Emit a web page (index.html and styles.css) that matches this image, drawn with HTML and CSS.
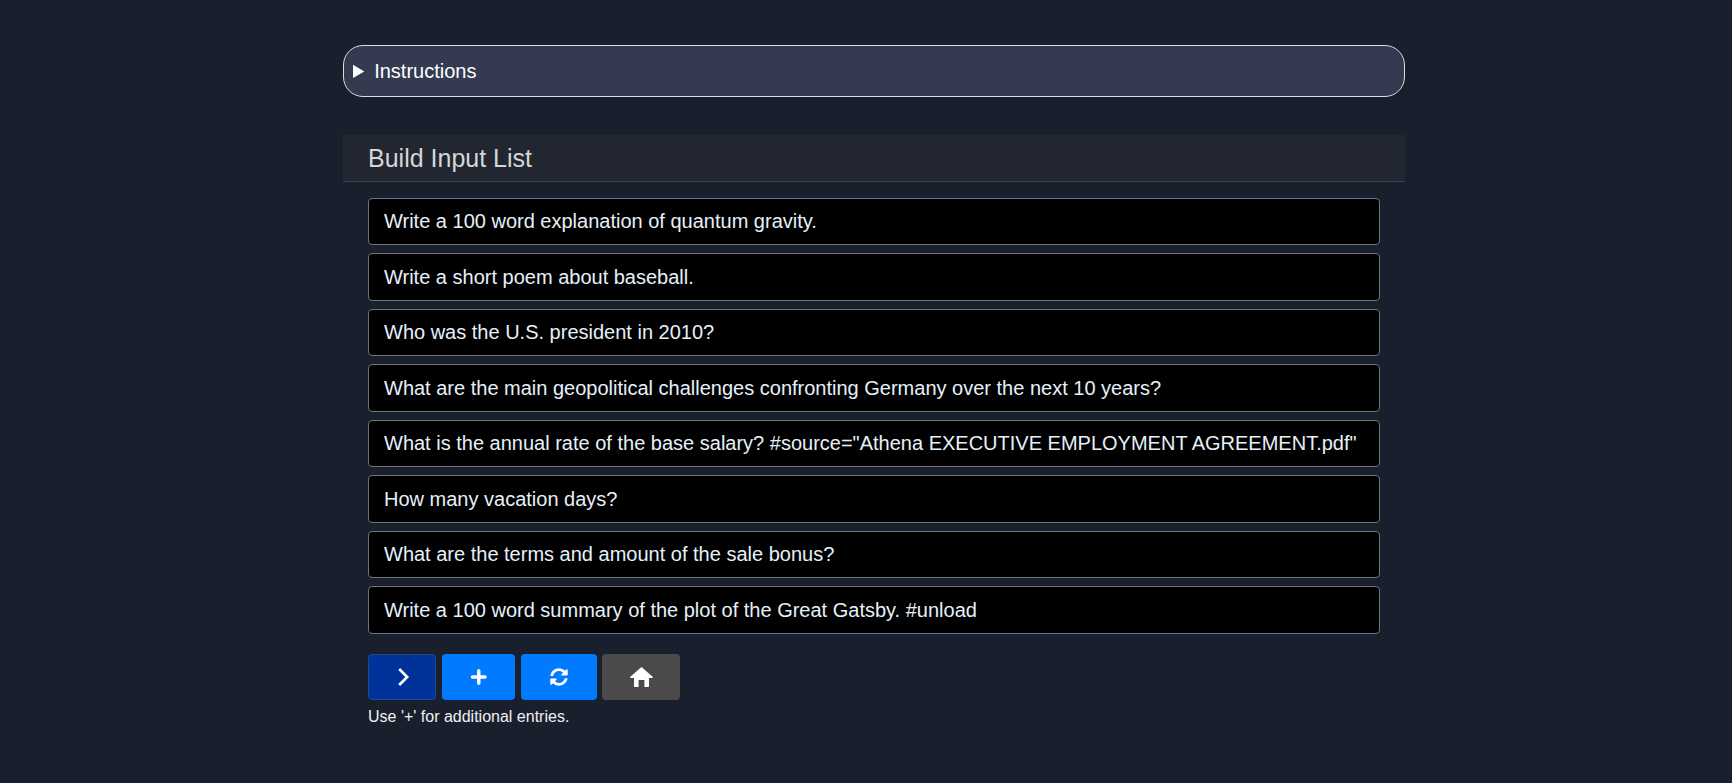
FILE: index.html
```html
<!DOCTYPE html>
<html lang="en">
<head>
    <meta charset="UTF-8">
    <meta name="viewport" content="width=device-width, initial-scale=1.0">
    <title>Batch Input</title>
    <link rel="stylesheet" href="styles.css">
</head>
<body>
    <div class="page">
        <details class="instructions">
            <summary>Instructions</summary>
        </details>

        <div class="card">
            <div class="card-header">Build Input List</div>
            <div class="card-body">
                <div class="input-list">
                    <input class="input-row" type="text" value="Write a 100 word explanation of quantum gravity.">
                    <input class="input-row" type="text" value="Write a short poem about baseball.">
                    <input class="input-row" type="text" value="Who was the U.S. president in 2010?">
                    <input class="input-row" type="text" value="What are the main geopolitical challenges confronting Germany over the next 10 years?">
                    <input class="input-row" type="text" value="What is the annual rate of the base salary? #source=&quot;Athena EXECUTIVE EMPLOYMENT AGREEMENT.pdf&quot;">
                    <input class="input-row" type="text" value="How many vacation days?">
                    <input class="input-row" type="text" value="What are the terms and amount of the sale bonus?">
                    <input class="input-row" type="text" value="Write a 100 word summary of the plot of the Great Gatsby. #unload">
                </div>
                <div class="buttons">
                    <button class="btn btn-go" aria-label="Run">
                        <svg width="20" height="20" viewBox="0 0 20 20"><path d="M7.200 2 15.200 10l-8 8" fill="none" stroke="#fff" stroke-width="2.600"/></svg>
                    </button>
                    <button class="btn btn-add" aria-label="Add">
                        <svg width="20" height="20" viewBox="0 0 20 20"><path d="M10.800 3.700v12.600M4.500 10h12.600" fill="none" stroke="#fff" stroke-width="3.400" stroke-linecap="round"/></svg>
                    </button>
                    <button class="btn btn-reset" aria-label="Reset">
                        <svg width="18" height="18" viewBox="0 0 512 512"><path fill="#fff" d="M370.700 133.300C339.500 104 298.900 88 255.800 88c-77.500.1-144.300 53.200-162.800 126.900-1.300 5.400-6.100 9.200-11.700 9.200H24.100c-7.500 0-13.200-6.800-11.800-14.200C33.900 94.900 134.800 8 256 8c66.400 0 126.800 26.100 171.300 68.700L463 41C478.100 25.900 504 36.600 504 57.900V192c0 13.300-10.700 24-24 24H345.900c-21.400 0-32.100-25.900-17-41l41.800-41.700zM32 296h134.100c21.400 0 32.100 25.900 17 41l-41.800 41.800c31.300 29.300 71.800 45.300 114.900 45.200 77.400-.1 144.300-53.100 162.800-126.800 1.300-5.400 6.100-9.200 11.700-9.200h57.300c7.500 0 13.200 6.800 11.800 14.200C478.100 417.100 377.200 504 256 504c-66.400 0-126.800-26.100-171.300-68.700L49 471C33.900 486.100 8 475.400 8 454.100V320c0-13.300 10.700-24 24-24z"/></svg>
                    </button>
                    <button class="btn btn-home" aria-label="Home">
                        <svg width="23" height="20" viewBox="0 0 23 20"><path fill="#fff" d="M11.500 0 .4 9.800c-.5.500-.2 1.200.5 1.200H4v8c0 .6.400 1 1 1h3.600v-7h5.800v7H18c.6 0 1-.4 1-1v-8h3.100c.7 0 1-.7.500-1.200z"/></svg>
                    </button>
                </div>
                <p class="hint">Use '+' for additional entries.</p>
            </div>
        </div>
    </div>
</body>
</html>
```

FILE: styles.css
```css
* {
    box-sizing: border-box;
}

body {
    margin: 0;
    padding-left: 16px;
    min-height: 100vh;
    background-color: #1a1f2e;
    font-family: 'Liberation Sans', sans-serif;
    color: #fff;
}

.page {
    width: 1062px;
    margin: 0 auto;
    padding-top: 45px;
}

.instructions {
    height: 52px;
    background-color: #343a50;
    border: 1px solid #dcdcdc;
    border-radius: 20px;
    padding: 0 9px;
}

.instructions summary {
    line-height: 50px;
    font-size: 20px;
    cursor: pointer;
}

.card {
    margin-top: 38px;
}

.card-header {
    height: 47px;
    padding: 0 25px;
    background-color: #212631;
    border-bottom: 1px solid #3d414e;
    font-size: 25px;
    line-height: 46px;
    color: #d4d6da;
}

.card-body {
    padding: 15.900px 25px;
}

.input-list {
    display: flex;
    flex-direction: column;
    gap: 8px;
}

.input-row {
    display: block;
    width: 100%;
    height: 47.500px;
    padding: 0 15px;
    background-color: #000;
    border: 1px solid #6c757d;
    border-radius: 4px;
    font-family: inherit;
    font-size: 20px;
    color: #e6f0fa;
}

.buttons {
    display: flex;
    gap: 5.600px;
    margin-top: 20px;
}

.btn {
    display: flex;
    align-items: center;
    justify-content: center;
    height: 46px;
    padding: 0;
    border: none;
    border-radius: 4px;
    cursor: pointer;
}

.btn-go {
    width: 68px;
    background-color: #003399;
    border: 1px solid #1d4a8f;
}

.btn-add {
    width: 73.500px;
    background-color: #007bff;
}

.btn-reset {
    width: 76px;
    background-color: #007bff;
}

.btn-home {
    width: 78px;
    background-color: #4a4a4a;
}

.hint {
    margin: 8px 0 0;
    font-size: 16px;
    color: #f0f0f0;
}
```
